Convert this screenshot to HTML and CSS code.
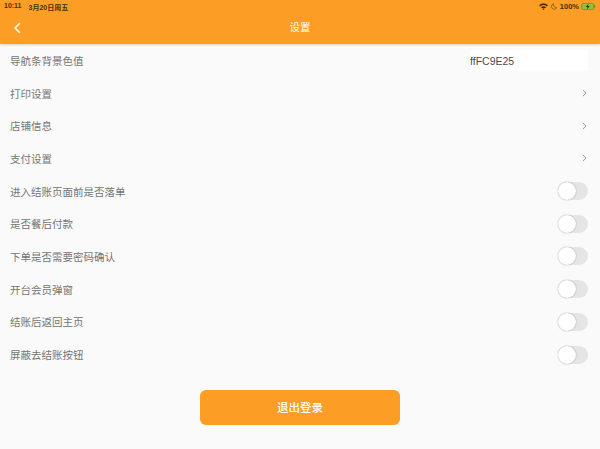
FILE: index.html
```html
<!DOCTYPE html>
<html lang="zh">
<head>
<meta charset="utf-8">
<title>设置</title>
<link rel="stylesheet" href="styles.css">
</head>
<body>
<header class="header">
  <div class="status">
    <span class="status-left"><span>10:11</span><span>3月20日周五</span></span>
    <span class="status-right">
      <svg class="wifi" viewBox="0 0 10 8" width="9" height="7"><path d="M0 2.6C2.8 0 7.2 0 10 2.6L8.8 3.9C6.6 1.9 3.4 1.9 1.2 3.9zM2.2 4.8C3.8 3.4 6.2 3.4 7.8 4.8L6.7 6C5.7 5.1 4.3 5.1 3.3 6zM3.9 6.8C4.5 6.3 5.5 6.3 6.1 6.8L5 8z" fill="#3a2405"/></svg>
      <svg class="moon" viewBox="0 0 8 8" width="6" height="7"><path d="M3.5.5A3.6 3.6 0 1 0 7.6 5.4 3.8 3.8 0 0 1 3.5.5z" fill="none" stroke="#7a5210" stroke-width="1"/></svg>
      <span class="pct">100%</span>
      <svg class="battery" viewBox="0 0 16 8" width="15" height="7"><rect x=".4" y=".4" width="13.6" height="7.2" rx="1.8" fill="#8fc43a" stroke="#6d7a2c" stroke-width=".7"/><rect x="14.4" y="2.6" width="1.2" height="2.8" rx=".5" fill="#6d7a2c"/><path d="M8 1L4.8 4.6H7L6.2 7 9.600 3.4H7.4z" fill="#20300c"/></svg>
    </span>
  </div>
  <div class="nav">
    <svg class="back" viewBox="0 0 10 14" width="8" height="12"><path d="M8 1.500L2.500 7 8 12.500" fill="none" stroke="#fff4dc" stroke-width="2.200" stroke-linecap="round" stroke-linejoin="round"/></svg>
    <span class="nav-title">设置</span>
  </div>
</header>
<main class="list">
  <div class="row"><span>导航条背景色值</span><input class="color-input" type="text" value="ffFC9E25"></div>
  <div class="row"><span>打印设置</span><svg class="chev" viewBox="0 0 6 10" width="5" height="8"><path d="M1 1L5 5 1 9" fill="none" stroke="#8a8a8a" stroke-width="1.100"/></svg></div>
  <div class="row"><span>店铺信息</span><svg class="chev" viewBox="0 0 6 10" width="5" height="8"><path d="M1 1L5 5 1 9" fill="none" stroke="#8a8a8a" stroke-width="1.100"/></svg></div>
  <div class="row"><span>支付设置</span><svg class="chev" viewBox="0 0 6 10" width="5" height="8"><path d="M1 1L5 5 1 9" fill="none" stroke="#8a8a8a" stroke-width="1.100"/></svg></div>
  <div class="row"><span>进入结账页面前是否落单</span><span class="toggle"><span class="knob"></span></span></div>
  <div class="row"><span>是否餐后付款</span><span class="toggle"><span class="knob"></span></span></div>
  <div class="row"><span>下单是否需要密码确认</span><span class="toggle"><span class="knob"></span></span></div>
  <div class="row"><span>开台会员弹窗</span><span class="toggle"><span class="knob"></span></span></div>
  <div class="row"><span>结账后返回主页</span><span class="toggle"><span class="knob"></span></span></div>
  <div class="row"><span>屏蔽去结账按钮</span><span class="toggle"><span class="knob"></span></span></div>
  <div class="actions"><button class="logout" type="button">退出登录</button></div>
</main>
</body>
</html>
```
FILE: styles.css
```css
* { box-sizing: border-box; }
html, body { margin: 0; padding: 0; }
body {
  width: 600px;
  height: 449px;
  overflow: hidden;
  background: #fafafa;
  font-family: "Noto Sans CJK SC", "Liberation Sans", sans-serif;
}
.header {
  height: 44px;
  background: #fc9e25;
  box-shadow: 0 1px 2px rgba(170, 120, 50, .35);
  display: flex;
  flex-direction: column;
}
.status {
  height: 12px;
  padding: 1.500px 4px 0;
  display: flex;
  justify-content: space-between;
  align-items: center;
  font-size: 7px;
  font-weight: 700;
  color: #4a2f08;
  font-family: "Liberation Sans", "Noto Sans CJK SC", sans-serif;
}
.status-left { display: flex; gap: 7px; }
.status-right { display: flex; align-items: center; gap: 3px; }
.pct { margin-right: -1px; font-size: 7.500px; }
.nav {
  flex: 1;
  display: flex;
  align-items: center;
  justify-content: center;
  padding-bottom: 4px;
}
.back { position: absolute; left: 13px; top: 22px; }
.nav-title { color: #fff; font-size: 10.500px; }
.list { display: flex; flex-direction: column; }
.row {
  height: 32.700px;
  padding: 0 12px 0 10px;
  display: flex;
  align-items: center;
  justify-content: space-between;
  font-size: 10.500px;
  color: #757575;
}
.color-input {
  width: 118px;
  height: 21px;
  border: 0;
  background: #fff;
  padding: 2px 0 0 0;
  font-family: "Liberation Sans", sans-serif;
  font-size: 10.500px;
  color: #4c4c4c;
  outline: none;
}
.chev { margin-right: 1px; }
.toggle {
  width: 30px;
  height: 18px;
  border-radius: 9px;
  background: #e5e5e5;
  display: flex;
  align-items: center;
}
.knob {
  width: 18px;
  height: 18px;
  border-radius: 50%;
  background: #fff;
  box-shadow: 0 0 1.500px rgba(0, 0, 0, .4);
}
.actions { display: flex; justify-content: center; padding-top: 19px; }
.logout {
  width: 200px;
  height: 35px;
  border: 0;
  border-radius: 6px;
  background: #fc9e25;
  color: #fff;
  font-family: "Noto Sans CJK SC", sans-serif;
  font-size: 11.500px;
  font-weight: 500;
}
```
